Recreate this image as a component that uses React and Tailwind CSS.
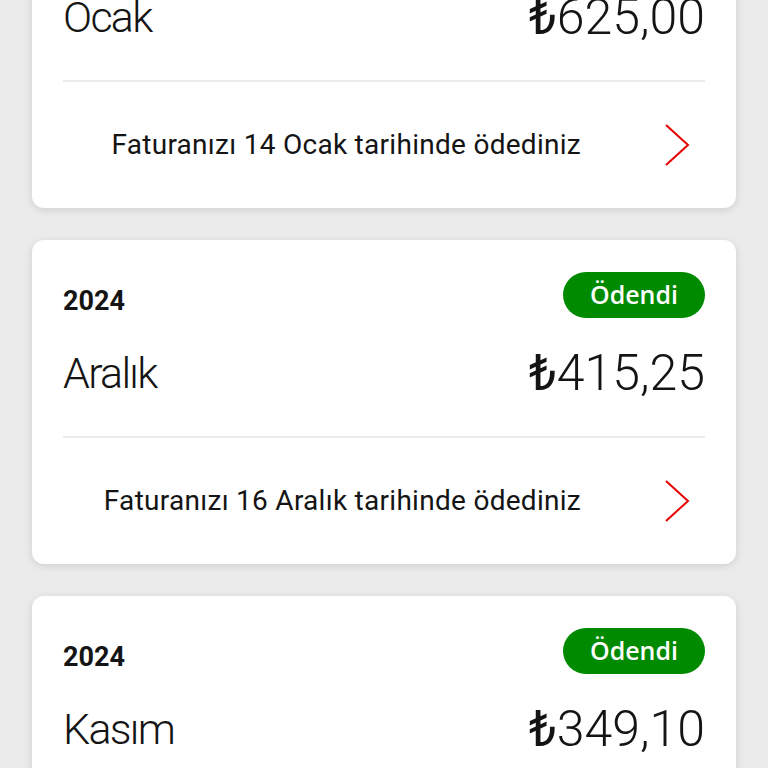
const bills = [
  { year: '2024', month: 'Ocak', amount: '625,00', note: 'Faturanızı 14 Ocak tarihinde ödediniz' },
  { year: '2024', month: 'Aralık', amount: '415,25', note: 'Faturanızı 16 Aralık tarihinde ödediniz' },
  { year: '2024', month: 'Kasım', amount: '349,10', note: 'Faturanızı 12 Kasım tarihinde ödediniz' },
];

function Chevron() {
  return (
    <svg width="26" height="42" viewBox="0 0 26 42" fill="none" className="shrink-0">
      <path d="M2 1 L24 21 L2 41" stroke="#e60000" strokeWidth="2" strokeLinejoin="miter" />
    </svg>
  );
}

function BillCard({ bill }) {
  return (
    <div className="bg-white rounded-xl shadow-[0_2px_8px_rgba(0,0,0,0.12)] px-[31px] pt-8 font-['Roboto',sans-serif] text-[#141414]">
      {/* Year + status */}
      <div className="flex items-center justify-between h-[46px]">
        <span className="text-[27px] font-bold mt-[12px]">{bill.year}</span>
        <span className="bg-[#008a00] text-white text-[25px] font-semibold font-['Open_Sans',sans-serif] rounded-full h-[46px] w-[142px] flex items-center justify-center">
          Ödendi
        </span>
      </div>

      {/* Month + amount */}
      <div className="flex items-center justify-between h-[118px] pb-[8px]">
        <span className="text-[43px] font-light tracking-[-0.04em]">{bill.month}</span>
        <span className="text-[50px] font-light">
          <span className="font-normal">₺</span>
          {bill.amount}
        </span>
      </div>

      <div className="h-[2px] bg-[#ebebeb]" />

      {/* Paid note */}
      <div className="flex items-center justify-end h-[126px]">
        <span className="text-[28px] font-normal tracking-[0.01em]">{bill.note}</span>
        <div className="w-[109px] flex justify-end">
          <Chevron />
        </div>
        <div className="w-[15px]" />
      </div>
    </div>
  );
}

export default function App() {
  return (
    <div className="min-h-screen h-[768px] overflow-hidden bg-[#ebebeb]">
      <div className="px-8 flex flex-col gap-8 -mt-[116px]">
        {bills.map((b) => (
          <BillCard key={b.month} bill={b} />
        ))}
      </div>
    </div>
  );
}
